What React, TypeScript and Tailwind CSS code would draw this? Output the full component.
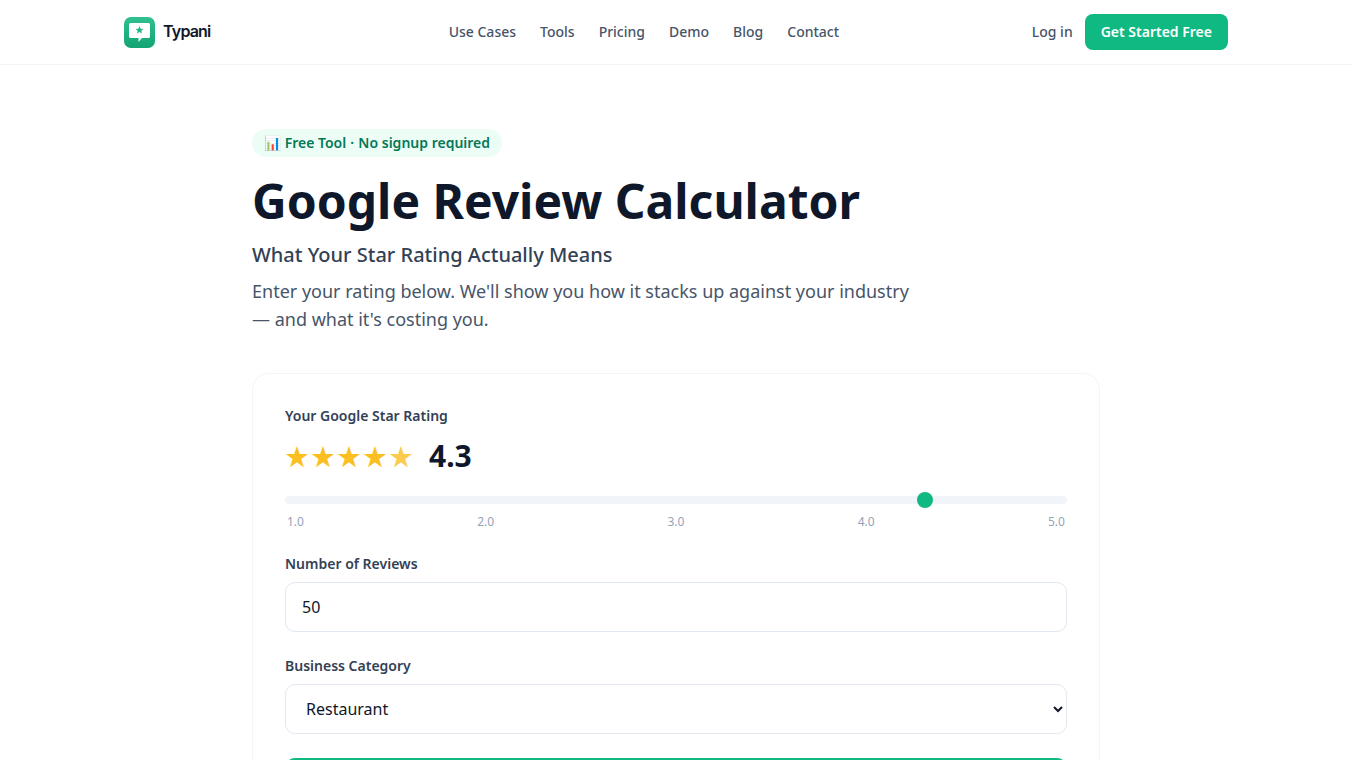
import { useState } from "react"

const navLinks = ["Use Cases", "Tools", "Pricing", "Demo", "Blog", "Contact"]
const ticks = ["1.0", "2.0", "3.0", "4.0", "5.0"]

function Logo() {
  return (
    <svg width="31" height="31" viewBox="0 0 31 31" className="shrink-0">
      <defs>
        <linearGradient id="logoBg" x1="0" y1="0" x2="0" y2="1">
          <stop offset="0" stopColor="#2fc08f" />
          <stop offset="1" stopColor="#12a473" />
        </linearGradient>
      </defs>
      <rect width="31" height="31" rx="7" fill="url(#logoBg)" />
      <path d="M6.500 6h18a1.500 1.500 0 0 1 1.500 1.500v12a1.500 1.500 0 0 1-1.500 1.500H18l-3.500 4v-4h-8A1.500 1.500 0 0 1 5 19.500v-12A1.500 1.500 0 0 1 6.500 6z" fill="#fff" />
      <path d="M15.500 9l1.100 2.700 2.900.2-2.200 1.900.7 2.800-2.500-1.500-2.500 1.500.7-2.800-2.200-1.900 2.900-.2z" fill="#1fb885" />
    </svg>
  )
}

export default function App() {
  const [rating, setRating] = useState(4.3)
  const [reviews, setReviews] = useState("50")

  return (
    <div className="h-[760px] overflow-hidden bg-white font-['Noto_Sans',sans-serif] text-[#0f172a]">
      {/* Header */}
      <header className="h-[65px] border-b border-[#f1f5f9]">
        <div className="mx-auto flex h-[64px] w-[1104px] items-center justify-between">
          <div className="flex w-[132px] items-center gap-2">
            <Logo />
            <span className="pb-0.5 font-['Inter',sans-serif] text-[16px] font-semibold tracking-[-0.8px] text-[#0f172a]">Typani</span>
          </div>
          <nav className="flex items-center gap-6 pb-0.5">
            {navLinks.map(link => (
              <a key={link} className="text-[14px] font-medium text-[#475569]">{link}</a>
            ))}
          </nav>
          <div className="flex items-center gap-3">
            <a className="pb-0.5 text-[14px] font-medium text-[#475569]">Log in</a>
            <button className="h-9 rounded-lg bg-[#10b981] px-4 pb-0.5 text-[14px] font-semibold text-white">Get Started Free</button>
          </div>
        </div>
      </header>

      <main className="mx-auto w-[848px] pt-16">
        <span className="inline-block rounded-full bg-[#ecfdf5] px-3 py-1 text-[14px] leading-[20px] font-semibold text-[#047857]">📊 Free Tool <span className="mx-[0.5px]">·</span> No signup required</span>
        <h1 className="mt-[15px] text-[48px] leading-[58px] font-bold text-[#0f172a]">Google Review Calculator</h1>
        <h2 className="mt-2.5 text-[20px] leading-[30px] font-medium text-[#334155]">What Your Star Rating Actually Means</h2>
        <p className="mt-[7px] w-[670px] text-[18px] leading-[28px] text-[#475569]">Enter your rating below. We'll show you how it stacks up against your industry — and what it's costing you.</p>

        {/* Calculator card */}
        <section className="mt-10 rounded-2xl border border-[#f1f5f9] bg-white p-8">
          <label className="block text-[14px] leading-[20px] font-semibold text-[#334155]">Your Google Star Rating</label>
          <div className="mt-2 flex h-[44px] items-center gap-[15px]">
            <div className="-ml-px flex pb-0.5 text-[29px] leading-none text-[#fbbf24]">
              <span>★</span><span>★</span><span>★</span><span>★</span><span className="opacity-80">★</span>
            </div>
            <span className="text-[30px] leading-[44px] font-bold text-[#0f172a]">{rating.toFixed(1)}</span>
          </div>
          <input
            type="range"
            min={1}
            max={5}
            step={0.1}
            value={rating}
            onChange={e => setRating(Number(e.target.value))}
            className="mt-[18px] block h-2 w-full appearance-none rounded bg-[#f1f5f9] [&::-webkit-slider-thumb]:h-4 [&::-webkit-slider-thumb]:w-4 [&::-webkit-slider-thumb]:appearance-none [&::-webkit-slider-thumb]:rounded-full [&::-webkit-slider-thumb]:bg-[#10b981]"
          />
          <div className="mt-[9px] flex justify-between px-0.5 text-[12px] leading-[18px] text-[#94a3b8]">
            {ticks.map(tick => <span key={tick}>{tick}</span>)}
          </div>

          <label className="mt-[23px] block text-[14px] leading-[20px] font-semibold text-[#334155]">Number of Reviews</label>
          <input
            type="number"
            value={reviews}
            onChange={e => setReviews(e.target.value)}
            className="mt-2 block h-[50px] w-full appearance-none rounded-[10px] border border-[#e2e8f0] px-4 text-[16px] text-[#0f172a] outline-none [&::-webkit-inner-spin-button]:appearance-none"
          />

          <label className="mt-6 block text-[14px] leading-[20px] font-semibold text-[#334155]">Business Category</label>
          <select className="mt-2 block h-[50px] w-full rounded-[10px] border border-[#e2e8f0] bg-white px-4 text-[16px] text-[#0f172a] outline-none">
            <option>Restaurant</option>
            <option>Dental Practice</option>
            <option>Hair Salon</option>
          </select>

          {/* label sits below the fold in the screenshot */}
          <button className="mt-6 h-[52px] w-full rounded-[10px] bg-[#10b981]" />
        </section>
      </main>
    </div>
  )
}
